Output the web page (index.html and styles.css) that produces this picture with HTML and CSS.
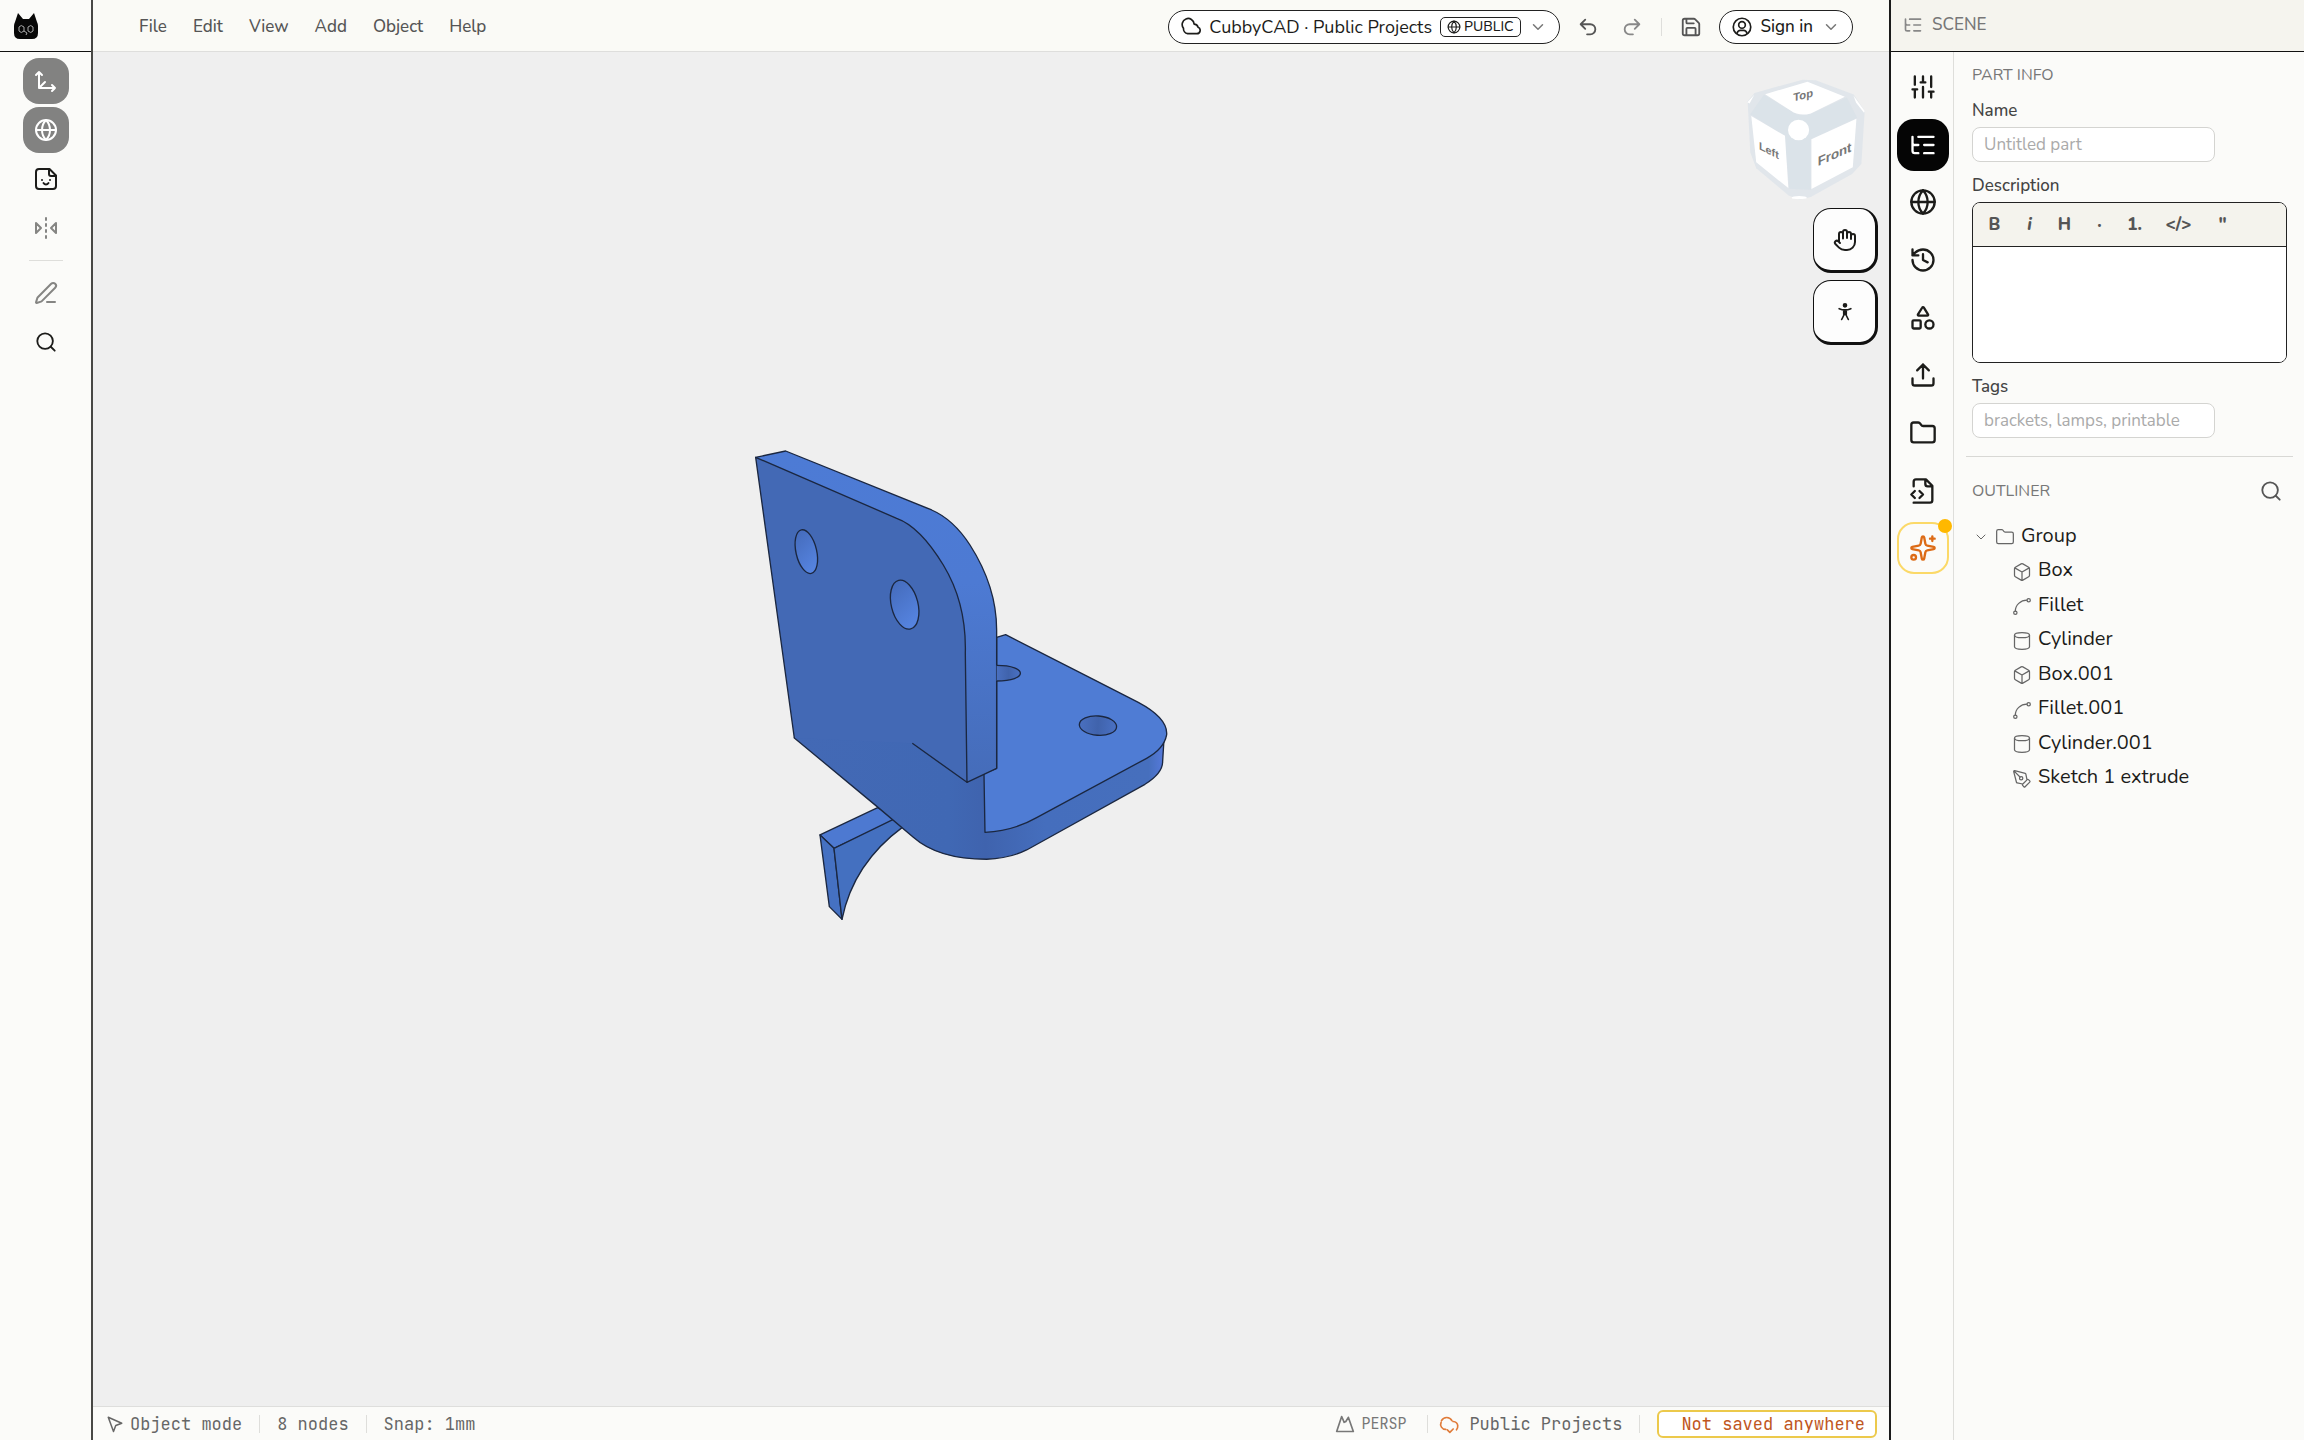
FILE: index.html
```html
<!DOCTYPE html>
<html lang="en">
<head>
<meta charset="utf-8">
<title>CubbyCAD</title>
<link rel="stylesheet" href="styles.css">
</head>
<body>
<svg class="sprite" aria-hidden="true">
  <symbol id="i-globe" viewBox="0 0 24 24"><circle cx="12" cy="12" r="10"/><path d="M12 2a14.5 14.5 0 0 0 0 20 14.5 14.5 0 0 0 0-20M2 12h20"/></symbol>
  <symbol id="i-search" viewBox="0 0 24 24"><circle cx="11" cy="11" r="8.5"/><path d="m21.500 21.500-4.300-4.300"/></symbol>
  <symbol id="i-chevron" viewBox="0 0 24 24"><path d="m6 9 6 6 6-6"/></symbol>
  <symbol id="i-tree" viewBox="0 0 24 24"><path d="M8 5h13M13 12h8M13 19h8M3 10a2 2 0 0 0 2 2h3M3 5v12a2 2 0 0 0 2 2h3"/></symbol>
  <symbol id="i-folder" viewBox="0 0 24 24"><path d="M20 20a2 2 0 0 0 2-2V8a2 2 0 0 0-2-2h-7.900a2 2 0 0 1-1.690-.9L9.600 3.900A2 2 0 0 0 7.930 3H4a2 2 0 0 0-2 2v13a2 2 0 0 0 2 2Z"/></symbol>
  <symbol id="i-box" viewBox="0 0 24 24"><path d="M21 8a2 2 0 0 0-1-1.730l-7-4a2 2 0 0 0-2 0l-7 4A2 2 0 0 0 3 8v8a2 2 0 0 0 1 1.730l7 4a2 2 0 0 0 2 0l7-4A2 2 0 0 0 21 16ZM3.300 7l8.700 5 8.700-5M12 22V12"/></symbol>
  <symbol id="i-fillet" viewBox="0 0 24 24"><circle cx="20" cy="5" r="2"/><circle cx="4" cy="20" r="2"/><path d="M4 18A14 13 0 0 1 18 5"/></symbol>
  <symbol id="i-cylinder" viewBox="0 0 24 24"><ellipse cx="12" cy="5" rx="9" ry="3"/><path d="M3 5v14a9 3 0 0 0 18 0V5"/></symbol>
  <symbol id="i-cloud" viewBox="0 0 24 24"><path d="M8 20h11a4 4 0 0 0 1.500-7.700 5 5 0 0 0-4.700-3.800A7.200 7.200 0 1 0 3 13.500 6 6 0 0 0 8 20Z"/></symbol>
</svg>

<div class="app">
  <aside class="rail">
    <div class="brand">
      <svg class="logo" viewBox="0 0 24 26" role="img" aria-label="CubbyCAD"><path d="M1 9 4 0 9 6h6l5-6 3 9q1 2 1 4v7q0 6-6 6H6q-6 0-6-6v-7q0-2 1-4Z"/><path class="eyes" d="M5 14q2-3 5 0v4q-3 3-5 0ZM14 14q3-3 5 0v4q-2 3-5 0ZM10 18l3 2-1 2"/></svg>
    </div>
    <nav class="tools" aria-label="Tools">
      <button class="tool on" aria-label="Gizmo"><svg class="icon i24" viewBox="0 0 24 24"><path d="M5 3v16h16M5 19l6-6M2 6l3-3 3 3M18 16l3 3-3 3"/></svg></button>
      <button class="tool on" aria-label="World"><svg class="icon i24"><use href="#i-globe"/></svg></button>
      <button class="tool" aria-label="Sticker"><svg class="icon i24" viewBox="0 0 24 24"><path d="M15.500 2H5a3 3 0 0 0-3 3v14a3 3 0 0 0 3 3h14a3 3 0 0 0 3-3V8.500L15.500 2ZM15 2v5a2 2 0 0 0 2 2h5M8 13h.01M16 13h.01M9.500 16s1 1.500 2.500 1.500 2.500-1.500 2.500-1.500"/></svg></button>
      <button class="tool dim" aria-label="Mirror"><svg class="icon i24" viewBox="0 0 24 24"><path d="m2 7 5 5-5 5V7M22 7l-5 5 5 5V7M12 20v2M12 14v2M12 8v2M12 2v2"/></svg></button>
      <hr class="tool-line">
      <button class="tool dim" aria-label="Sketch"><svg class="icon i24" viewBox="0 0 24 24"><path d="M13 21h8M21.174 6.812a1 1 0 0 0-3.986-3.987L3.842 16.174a2 2 0 0 0-.5.83l-1.321 4.352a.5.5 0 0 0 .623.622l4.353-1.320a2 2 0 0 0 .83-.497z"/></svg></button>
      <button class="tool" aria-label="Search"><svg class="icon i22"><use href="#i-search"/></svg></button>
    </nav>
  </aside>

  <main class="center">
    <header class="topbar">
      <nav class="menu" aria-label="Main menu">
        <button>File</button><button>Edit</button><button>View</button><button>Add</button><button>Object</button><button>Help</button>
      </nav>
      <div class="actions">
        <button class="pill project"><svg class="icon i20"><use href="#i-cloud"/></svg><span>CubbyCAD · Public Projects</span><span class="badge"><svg class="icon i14"><use href="#i-globe"/></svg>PUBLIC</span><svg class="icon i18 faint"><use href="#i-chevron"/></svg></button>
        <button class="act" aria-label="Undo"><svg class="icon i22" viewBox="0 0 24 24"><path d="M9 14 4 9l5-5M4 9h10.500a5.500 5.500 0 0 1 0 11H11"/></svg></button>
        <button class="act redo" aria-label="Redo"><svg class="icon i22" viewBox="0 0 24 24"><path d="m15 14 5-5-5-5M20 9H9.500a5.500 5.500 0 0 0 0 11H13"/></svg></button>
        <span class="bar"></span>
        <button class="act" aria-label="Save"><svg class="icon i22" viewBox="0 0 24 24"><path d="M15.200 3a2 2 0 0 1 1.400.6l3.800 3.800a2 2 0 0 1 .6 1.400V19a2 2 0 0 1-2 2H5a2 2 0 0 1-2-2V5a2 2 0 0 1 2-2zM17 21v-7a1 1 0 0 0-1-1H8a1 1 0 0 0-1 1v7M7 3v4a1 1 0 0 0 1 1h7"/></svg></button>
        <button class="pill signin"><svg class="icon i20" viewBox="0 0 24 24"><circle cx="12" cy="12" r="10.500"/><circle cx="12" cy="9.500" r="4"/><path d="M6 19.500q1-3.500 4-3.500h4q3 0 4 3.500"/></svg><span>Sign in</span><svg class="icon i18 faint"><use href="#i-chevron"/></svg></button>
      </div>
    </header>

    <section class="viewport" aria-label="3D view">
      <svg class="model" viewBox="93 52 1796 1354" role="img" aria-label="Bracket model">
        <defs>
          <linearGradient id="g-side" x1="0" y1="0" x2="0" y2="1"><stop offset="0" stop-color="#4d7bd5"/><stop offset=".4" stop-color="#4d7ad3"/><stop offset="1" stop-color="#456cb9"/></linearGradient>
          <linearGradient id="g-body" gradientUnits="userSpaceOnUse" x1="160" y1="0" x2="1270" y2="0"><stop offset="0" stop-color="#4369b5"/><stop offset=".42" stop-color="#4068b4"/><stop offset=".52" stop-color="#3f63ae"/><stop offset=".68" stop-color="#456ebd"/><stop offset=".96" stop-color="#466fbd"/><stop offset="1" stop-color="#5579da"/></linearGradient>
          <linearGradient id="g-hole" x1="0" y1="0" x2=".3" y2="1"><stop offset="0" stop-color="#4369b8"/><stop offset="1" stop-color="#5583df"/></linearGradient>
          <linearGradient id="g-hole2" x1="0" y1="0" x2="1" y2="0"><stop offset="0" stop-color="#4a70c0"/><stop offset=".5" stop-color="#4063ac"/><stop offset="1" stop-color="#4a71c4"/></linearGradient>
        </defs>
        <g class="solid" transform="translate(740 430) scale(.3333)">
          <path fill="#4d79d1" d="M240 1215 413 1133 475 1165 282 1255Z"/>
          <path fill="#4571c2" d="M240 1215 282 1255 306 1468 268 1430Z"/>
          <path fill="#4470c0" d="M282 1255 460 1168 490 1190Q340 1300 306 1468Z"/>
          <path fill="url(#g-body)" d="M300 800 163 924 415 1133 520 1222C580 1275 660 1288 740 1288 790 1286 830 1275 860 1260L1215 1063Q1268 1030 1268 995L1272 930 900 1000 740 800Z"/>
          <path fill="#4f7cd4" d="M770 622 797 614 1060 748 1195 817Q1285 865 1280 915 1272 957 1220 985L890 1163Q820 1203 735 1207L732 1030 770 1015Z"/>
          <path fill="url(#g-side)" d="M47 82 137 63 575 240Q640 268 690 345 770 470 770 600V1015L681 1057 560 600Z"/>
          <path class="plain" fill="#4369b5" d="M47 82 470 265Q540 290 610 405 680 520 676 670L681 1057 517 940 163 924Z"/>
          <path fill="none" d="M517 940 681 1057 676 670Q680 520 610 405 540 290 470 265L47 82 163 924"/>
          <path fill="url(#g-hole2)" d="M770 706C865 706 865 753 770 753"/>
          <ellipse cx="1074" cy="887" rx="56" ry="29" fill="url(#g-hole2)" transform="rotate(4 1074 887)"/>
          <ellipse cx="199" cy="365" rx="31" ry="67" fill="url(#g-hole)" transform="rotate(-13 199 365)"/>
          <ellipse cx="494" cy="524" rx="40" ry="75" fill="url(#g-hole)" transform="rotate(-14 494 524)"/>
        </g>
      </svg>
      <div class="nav3d">
        <svg class="cube" viewBox="78 55 362 372" role="img" aria-label="View cube">
          <path fill="#e1e6eb" d="M84 125 105 100 250 60 290 62 405 105 438 155 428 315 400 345 275 415 240 423 208 410 110 328 92 280Z"/>
          <path fill="#d9e1e8" d="M92 165 133 106 235 166 275 163 384 114 415 175 275 240 275 393 210 390 195 230Z" opacity=".7"/>
          <g class="faces"><path d="M137 104 265 66 378 112 275 162Q240 172 215 154Z"/><path d="M95 170 197 230 207 388 110 310Z"/><path d="M277 240 413 178 402 325 277 391Z"/><ellipse cx="238" cy="212" rx="32" ry="31"/><ellipse cx="240" cy="417" rx="23" ry="5"/><path d="M404 108 438 155 436 160 412 130Z"/><path d="M83 128 104 106 90 132Z"/></g>
          <text transform="translate(118 270) skewY(27)" font-size="33">Left</text>
          <text transform="translate(296 322) skewY(-24)" font-size="40">Front</text>
          <text transform="translate(222 126) skewY(-14)" font-size="34">Top</text>
        </svg>
        <button class="nav-btn" aria-label="Pan"><svg class="icon i24" viewBox="0 0 24 24"><path d="M18 11V6a2 2 0 0 0-4 0M14 10V4a2 2 0 0 0-4 0v2M10 10.500V6a2 2 0 0 0-4 0v8M18 8a2 2 0 1 1 4 0v6a8 8 0 0 1-8 8h-2c-2.800 0-4.500-.86-5.990-2.340l-3.600-3.600a2 2 0 0 1 2.830-2.820L7 15"/></svg></button>
        <button class="nav-btn" aria-label="Standing view"><svg class="icon i20" viewBox="0 0 24 24"><circle cx="12" cy="4" r="1.800" fill="currentColor"/><path d="M5 8q7 3 14 0M12 10v5M8 21l3-6h2l3 6M10.500 10v5M13.500 10v5"/></svg></button>
      </div>
    </section>

    <footer class="status">
      <span class="stat mode"><svg class="icon i18" viewBox="0 0 24 24"><path d="M3 3 10 22l3-8 8-3Z"/></svg>Object mode</span>
      <span class="bar"></span>
      <span class="stat">8 nodes</span>
      <span class="bar"></span>
      <span class="stat">Snap: 1mm</span>
      <span class="grow"></span>
      <button class="persp"><svg class="icon i20" viewBox="0 0 24 24"><path d="M2 21 8 3l3 7 2-1 3-5 6 17Z"/></svg>PERSP</button>
      <span class="bar"></span>
      <span class="stat cloud"><svg class="icon i20" viewBox="0 0 24 24"><path d="M8 18.500A6 6 0 0 1 2.500 10M3 8a7 7 0 0 1 12.500 0M17 9q5 .5 5.500 5 .2 3-1.500 5M10 19l3 3 4-4"/></svg>Public Projects</span>
      <span class="bar"></span>
      <button class="unsaved">Not saved anywhere</button>
    </footer>
  </main>

  <aside class="side">
    <header class="side-head"><svg class="icon i20"><use href="#i-tree"/></svg><h1>SCENE</h1></header>
    <div class="side-body">
      <nav class="tabs" aria-label="Panels">
        <button class="tab" aria-label="Properties"><svg class="icon i28" viewBox="0 0 24 24"><path d="M10 8h4M12 21v-9M12 8V3M17 16h4M19 12V3M19 21v-5M3 14h4M5 10V3M5 21v-7"/></svg></button>
        <button class="tab active" aria-label="Scene"><svg class="icon i28"><use href="#i-tree"/></svg></button>
        <button class="tab" aria-label="World"><svg class="icon i28"><use href="#i-globe"/></svg></button>
        <button class="tab" aria-label="History"><svg class="icon i28" viewBox="0 0 24 24"><path d="M3 12a9 9 0 1 0 9-9 9.750 9.750 0 0 0-6.740 2.740L3 8M3 3v5h5M12 7v5l4 2"/></svg></button>
        <button class="tab" aria-label="Shapes"><svg class="icon i28" viewBox="0 0 24 24"><path d="M8.300 10a.7.7 0 0 1-.626-1.079L11.400 3a.7.7 0 0 1 1.198-.043L16.300 8.900a.7.7 0 0 1-.572 1.100Z"/><rect x="3" y="14" width="7" height="7" rx="1"/><circle cx="17.500" cy="17.500" r="3.500"/></svg></button>
        <button class="tab" aria-label="Export"><svg class="icon i28" viewBox="0 0 24 24"><path d="M12 3v12M17 8l-5-5-5 5M21 15v4a2 2 0 0 1-2 2H5a2 2 0 0 1-2-2v-4"/></svg></button>
        <button class="tab" aria-label="Files"><svg class="icon i28"><use href="#i-folder"/></svg></button>
        <button class="tab" aria-label="Code"><svg class="icon i28" viewBox="0 0 24 24"><path d="M4 8V4a2 2 0 0 1 2-2h8.500L20 7.500V20a2 2 0 0 1-2 2H4M14 2v4a2 2 0 0 0 2 2h4M5 12l-3 3 3 3M9 18l3-3-3-3"/></svg></button>
        <button class="tab spark" aria-label="Assistant"><svg class="icon i28" viewBox="0 0 24 24"><path d="M11.017 2.814a1 1 0 0 1 1.966 0l1.051 5.558a2 2 0 0 0 1.594 1.594l5.558 1.051a1 1 0 0 1 0 1.966l-5.558 1.051a2 2 0 0 0-1.594 1.594l-1.051 5.558a1 1 0 0 1-1.966 0l-1.051-5.558a2 2 0 0 0-1.594-1.594l-5.558-1.051a1 1 0 0 1 0-1.966l5.558-1.051a2 2 0 0 0 1.594-1.594zM20 2v4M22 4h-4"/><circle cx="4" cy="20" r="2"/></svg></button>
      </nav>
      <div class="panel">
        <section class="info">
          <h2>PART INFO</h2>
          <label for="part-name">Name</label>
          <input id="part-name" type="text" placeholder="Untitled part">
          <label for="part-desc">Description</label>
          <div class="editor">
            <div class="format">
              <button>B</button><button class="it">i</button><button>H</button><button>·</button><button>1.</button><button class="wide">&lt;/&gt;</button><button>"</button>
            </div>
            <textarea id="part-desc"></textarea>
          </div>
          <label for="part-tags">Tags</label>
          <input id="part-tags" type="text" placeholder="brackets, lamps, printable">
        </section>
        <section class="outliner">
          <div class="outliner-head"><h2>OUTLINER</h2><button class="act" aria-label="Search outliner"><svg class="icon i22"><use href="#i-search"/></svg></button></div>
          <ul class="nodes">
            <li><svg class="icon i16 faint"><use href="#i-chevron"/></svg><svg class="icon i20"><use href="#i-folder"/></svg>Group</li>
            <li class="child"><svg class="icon i20"><use href="#i-box"/></svg>Box</li>
            <li class="child"><svg class="icon i20"><use href="#i-fillet"/></svg>Fillet</li>
            <li class="child"><svg class="icon i20"><use href="#i-cylinder"/></svg>Cylinder</li>
            <li class="child"><svg class="icon i20"><use href="#i-box"/></svg>Box.001</li>
            <li class="child"><svg class="icon i20"><use href="#i-fillet"/></svg>Fillet.001</li>
            <li class="child"><svg class="icon i20"><use href="#i-cylinder"/></svg>Cylinder.001</li>
            <li class="child"><svg class="icon i20" viewBox="0 0 24 24"><path d="M15.707 21.293a1 1 0 0 1-1.414 0l-1.586-1.586a1 1 0 0 1 0-1.414l5.586-5.586a1 1 0 0 1 1.414 0l1.586 1.586a1 1 0 0 1 0 1.414zM18 13l-1.375-6.874a1 1 0 0 0-.746-.776L3.235 2.028a1 1 0 0 0-1.207 1.207L5.350 15.879a1 1 0 0 0 .776.746L13 18M2.300 2.300l7.286 7.286"/><circle cx="11" cy="11" r="2"/></svg>Sketch 1 extrude</li>
          </ul>
        </section>
      </div>
    </div>
  </aside>
</div>
</body>
</html>
```
FILE: styles.css
```css
* { box-sizing: border-box; }

body {
  margin: 0;
  font-family: Nunito, Lato, "Open Sans", sans-serif;
  font-size: 17px;
  line-height: 24px;
  color: #1c1c1a;
  background: #fbfbf9;
}

button, input, textarea { font: inherit; color: inherit; }
button { margin: 0; padding: 0; border: 0; background: none; cursor: pointer; }
h1, h2 { margin: 0; font-size: 16px; font-weight: 400; color: #777; }
h1 { font-size: 17px; font-weight: 500; }
ul { margin: 0; padding: 0; list-style: none; }

.sprite { position: absolute; width: 0; height: 0; }
.icon {
  display: block;
  flex: none;
  fill: none;
  stroke: currentColor;
  stroke-width: 2;
  stroke-linecap: round;
  stroke-linejoin: round;
  overflow: visible;
}
.i14 { width: 14px; height: 14px; }
.i16 { width: 16px; height: 16px; }
.i18 { width: 18px; height: 18px; }
.i20 { width: 20px; height: 20px; }
.i22 { width: 22px; height: 22px; }
.i24 { width: 24px; height: 24px; }
.i28 { width: 28px; height: 28px; }
.faint { color: #777; }

.app {
  display: grid;
  grid-template-columns: 93px minmax(0, 1fr) 415px;
  min-height: 100vh;
}

/* left tool rail */
.rail { border-right: 2px solid #484845; }
.brand {
  display: flex;
  align-items: center;
  height: 52px;
  padding-left: 14px;
  border-bottom: 1px solid #111;
}
.logo { width: 24px; height: 26px; fill: #080808; }
.logo .eyes { fill: none; stroke: #aaa; stroke-width: 1; }
.tools { display: flex; flex-direction: column; align-items: center; gap: 3px; padding: 6px 0 0 1px; }
.tool {
  display: grid;
  place-items: center;
  width: 46px;
  height: 46px;
  border-radius: 16px;
}
.tool.on { background: #828281; color: #fff; }
.tool.dim { color: #858583; }
.tool-line { width: 34px; margin: 6px 0; border: 0; border-top: 1px solid #dededb; }

/* top bar */
.center { display: flex; flex-direction: column; min-width: 0; }
.topbar {
  display: flex;
  justify-content: space-between;
  align-items: center;
  height: 52px;
  padding: 2px 36px 0 46px;
  border-bottom: 1px solid #dededc;
  background: #fafaf6;
}
.menu, .actions { display: flex; align-items: center; }
.menu { gap: 26px; color: #555; font-weight: 500; }
.actions { gap: 12px; }
.actions .bar { margin: 0 1px; }
.pill {
  display: flex;
  align-items: center;
  gap: 9px;
  height: 34px;
  border: 1px solid #222;
  border-radius: 17px;
  padding: 0 12px;
  background: #fff;
  font-weight: 500;
}
.project { gap: 8px; font-size: 18px; font-weight: 400; }
.badge {
  display: flex;
  align-items: center;
  gap: 3px;
  height: 20px;
  padding: 0 6px;
  border: 1px solid #222;
  border-radius: 5px;
  font-size: 14px;
  font-weight: 500;
  line-height: 18px;
}
.act { display: grid; place-items: center; width: 32px; height: 35px; color: #555; }
.redo { color: #888; }
.bar { width: 1px; height: 18px; background: #dededb; }

/* viewport */
.viewport { position: relative; flex: 1; background: #efefef; }
.model { position: absolute; inset: 0; width: 100%; height: 100%; }
.solid { stroke: #1b2740; stroke-width: 4; stroke-linejoin: round; }
.solid .plain { stroke: none; }
.nav3d {
  position: absolute;
  top: 26px;
  right: 11px;
  display: flex;
  flex-direction: column;
  align-items: flex-end;
  gap: 7px;
}
.cube { width: 121px; height: 123px; margin-right: 12px; }
.cube .faces { fill: #fff; }
.cube text { fill: #777; font-family: "Liberation Sans", Arial, sans-serif; font-weight: 700; }
.nav-btn {
  display: grid;
  place-items: center;
  width: 65px;
  height: 65px;
  border: 1px solid #111;
  border-width: 1px 3px 3px 1px;
  border-radius: 18px;
  background: #fdfdfd;
}

/* status bar */
.status {
  display: flex;
  align-items: center;
  gap: 17px;
  height: 34px;
  padding: 0 12px 0 13px;
  border-top: 1px solid #dededc;
  font-family: "JetBrains Mono", "Liberation Mono", monospace;
  color: #666;
}
.stat, .persp { display: flex; align-items: center; white-space: nowrap; }
.mode { gap: 6px; }
.cloud { gap: 10px; margin-left: -6px; }
.cloud .icon { color: #e07b39; }
.persp { gap: 6px; margin-right: 4px; font-size: 15px; color: #777; }
.grow { flex: 1; }
.unsaved {
  height: 28px;
  padding: 0 10px 0 22px;
  border: 2px solid #ecc94b;
  border-radius: 6px;
  background: #fff;
  color: #c05621;
  white-space: nowrap;
}

/* right side panel */
.side { display: flex; flex-direction: column; border-left: 2px solid #1a1a1a; }
.side-head {
  display: flex;
  align-items: center;
  gap: 9px;
  height: 52px;
  padding: 0 0 2px 12px;
  border-bottom: 1px solid #111;
  background: #f5f4ee;
  color: #888;
}
.side-body { display: flex; flex: 1; }
.tabs {
  display: grid;
  grid-auto-rows: 58px 57px 58px;
  align-content: start;
  place-items: center;
  width: 63px;
  padding: 6px 0 0 2px;
  border-right: 1px solid #dededb;
}
.tab {
  position: relative;
  display: grid;
  place-items: center;
  width: 52px;
  height: 52px;
  border-radius: 17px;
}
.tab.active { background: #050505; color: #fff; }
.tab.spark { border: 2px solid #fbd968; color: #dd6b16; }
.tab.spark::after {
  content: "";
  position: absolute;
  top: -5px;
  right: -5px;
  width: 14px;
  height: 14px;
  border-radius: 50%;
  background: #ffb800;
}
.panel { flex: 1; min-width: 0; padding: 0 11px 0 12px; }
.info {
  display: flex;
  flex-direction: column;
  padding: 11px 6px 18px;
  border-bottom: 1px solid #d8d8d5;
}
.info label { margin: 12px 0 4px; color: #444; font-weight: 500; }
.info input {
  width: 243px;
  height: 35px;
  padding: 0 11px;
  border: 1px solid #d4d4d1;
  border-radius: 8px;
  background: #fff;
}
.info ::placeholder { color: #aaa; opacity: 1; }
.editor {
  border: 1px solid #222;
  border-radius: 8px;
  overflow: hidden;
  background: #fff;
}
.format {
  display: flex;
  padding: 4px;
  border-bottom: 1px solid #222;
  background: #f4f3ed;
  color: #555;
}
.format button { width: 35px; height: 35px; font-weight: 800; }
.format .wide { width: 53px; }
.format .it { font-style: italic; }
.editor textarea {
  display: block;
  width: 100%;
  height: 115px;
  padding: 8px;
  border: 0;
  resize: none;
  outline: 0;
}
.outliner { padding: 16px 6px; }
.outliner-head { display: flex; align-items: center; justify-content: space-between; }
.nodes { display: grid; grid-auto-rows: 35px 34px; padding-top: 10px; font-size: 20px; }
.nodes li { display: flex; align-items: center; gap: 6px; padding-left: 1px; }
.nodes li .icon { margin-top: 3px; stroke-width: 1.500; color: #666; }
.nodes .child { padding-left: 40px; }
```
